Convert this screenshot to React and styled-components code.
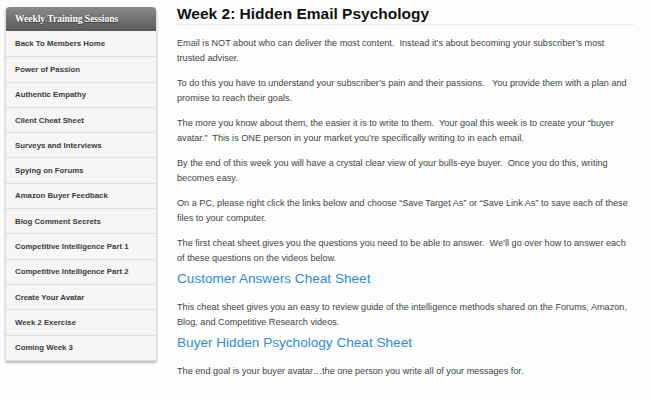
import React from "react";
import styled, { createGlobalStyle } from "styled-components";

const Global = createGlobalStyle`
  html, body { margin: 0; padding: 0; background: #fdfdfd; }
  body { font-family: "Liberation Sans", Arial, sans-serif; }
  * { box-sizing: border-box; }
`;

const Page = styled.div`
  display: flex;
  align-items: flex-start;
  gap: 20px;
  padding: 7px 0 0 5px;
  width: 650px;
  height: 400px;
  overflow: hidden;
`;

const Sidebar = styled.nav`
  flex: 0 0 152px;
  border-radius: 4px 4px 2px 2px;
  background: #f6f6f6;
  box-shadow: 0 2px 2px rgba(0, 0, 0, 0.25);
  border: 1px solid #dcdcdc;
  border-top: none;
`;

const SideHeader = styled.div`
  height: 24px;
  display: flex;
  align-items: center;
  padding-left: 9px;
  background: linear-gradient(#8a8a8a, #5a5a5a);
  border-radius: 4px 4px 0 0;
  color: #fff;
  font-family: "Liberation Serif", "Times New Roman", serif;
  font-weight: bold;
  font-size: 9.5px;
  text-shadow: 0 1px 1px rgba(0, 0, 0, 0.5);
`;

const SideItem = styled.div`
  height: 25.3px;
  display: flex;
  align-items: center;
  padding-left: 9px;
  border-top: ${(p) => (p.$first ? "none" : "1px solid #e0e0e0")};
  font-size: 7.8px;
  font-weight: bold;
  color: #3a3a3a;
`;

const Main = styled.main`
  flex: 1;
  padding-right: 16px;
`;

const Title = styled.h1`
  margin: -3px 0 4px;
  font-size: 15.5px;
  font-weight: bold;
  color: #111;
  line-height: 20px;
  border-bottom: 1px solid #eaeaea;
`;

const Para = styled.p`
  margin: 11px 0 0;
  font-size: 9.15px;
  line-height: 14.5px;
  color: #444;
`;

const LinkHead = styled.h2`
  margin: 4px 0 4px;
  font-size: 13.6px;
  font-weight: normal;
  color: #2f8dd0;
  line-height: 20px;
`;

const items = [
  "Back To Members Home",
  "Power of Passion",
  "Authentic Empathy",
  "Client Cheat Sheet",
  "Surveys and Interviews",
  "Spying on Forums",
  "Amazon Buyer Feedback",
  "Blog Comment Secrets",
  "Competitive Intelligence Part 1",
  "Competitive Intelligence Part 2",
  "Create Your Avatar",
  "Week 2 Exercise",
  "Coming Week 3",
];

export default function App() {
  return (
    <>
      <Global />
      <Page>
        <Sidebar>
          <SideHeader>Weekly Training Sessions</SideHeader>
          {items.map((t, i) => (
            <SideItem key={t} $first={i === 0}>
              {t}
            </SideItem>
          ))}
        </Sidebar>
        <Main>
          <Title>Week 2: Hidden Email Psychology</Title>
          <Para>
            Email is NOT about who can deliver the most content.&nbsp; Instead it’s about becoming your subscriber’s most trusted adviser.
          </Para>
          <Para>
            To do this you have to understand your subscriber’s pain and their passions.&nbsp;&nbsp; You provide them with a plan and promise to reach their goals.
          </Para>
          <Para>
            The more you know about them, the easier it is to write to them.&nbsp; Your goal this week is to create your “buyer avatar.”&nbsp; This is ONE person in your market you’re specifically writing to in each email.
          </Para>
          <Para>
            By the end of this week you will have a crystal clear view of your bulls-eye buyer.&nbsp; Once you do this, writing becomes easy.
          </Para>
          <Para>
            On a PC, please right click the links below and choose “Save Target As” or “Save Link As” to save each of these files to your computer.
          </Para>
          <Para>
            The first cheat sheet gives you the questions you need to be able to answer.&nbsp; We’ll go over how to answer each of these questions on the videos below.
          </Para>
          <LinkHead>Customer Answers Cheat Sheet</LinkHead>
          <Para>
            This cheat sheet gives you an easy to review guide of the intelligence methods shared on the Forums, Amazon, Blog, and Competitive Research videos.
          </Para>
          <LinkHead>Buyer Hidden Psychology Cheat Sheet</LinkHead>
          <Para>
            The end goal is your buyer avatar…the one person you write all of your messages for.
          </Para>
        </Main>
      </Page>
    </>
  );
}
